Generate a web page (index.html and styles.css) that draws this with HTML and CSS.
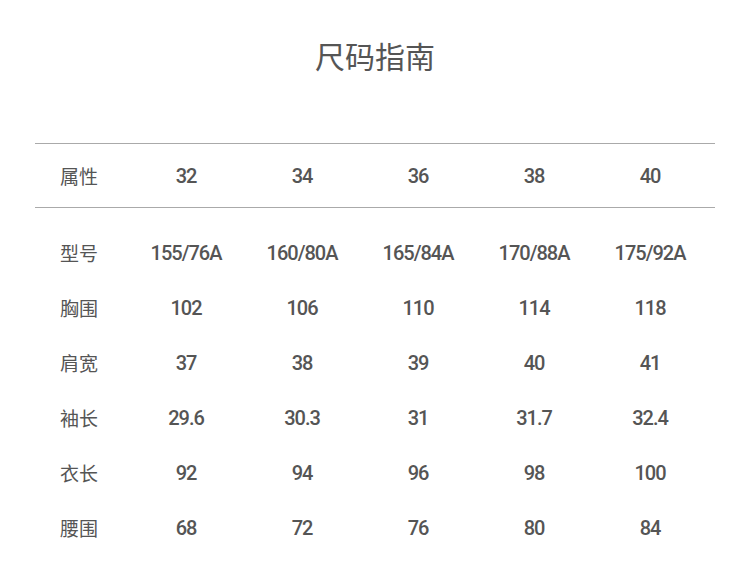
FILE: index.html
```html
<!DOCTYPE html>
<html lang="zh">
<head>
<meta charset="utf-8">
<link rel="stylesheet" href="styles.css">
</head>
<body>
<div class="page">
  <h1 class="title">尺码指南</h1>
  <div class="table">
    <div class="row head">
      <div class="label">属性</div><div class="cell">32</div><div class="cell">34</div><div class="cell">36</div><div class="cell">38</div><div class="cell">40</div>
    </div>
    <div class="body">
      <div class="row"><div class="label">型号</div><div class="cell">155/76A</div><div class="cell">160/80A</div><div class="cell">165/84A</div><div class="cell">170/88A</div><div class="cell">175/92A</div></div>
      <div class="row"><div class="label">胸围</div><div class="cell">102</div><div class="cell">106</div><div class="cell">110</div><div class="cell">114</div><div class="cell">118</div></div>
      <div class="row"><div class="label">肩宽</div><div class="cell">37</div><div class="cell">38</div><div class="cell">39</div><div class="cell">40</div><div class="cell">41</div></div>
      <div class="row"><div class="label">袖长</div><div class="cell">29.6</div><div class="cell">30.3</div><div class="cell">31</div><div class="cell">31.7</div><div class="cell">32.4</div></div>
      <div class="row"><div class="label">衣长</div><div class="cell">92</div><div class="cell">94</div><div class="cell">96</div><div class="cell">98</div><div class="cell">100</div></div>
      <div class="row"><div class="label">腰围</div><div class="cell">68</div><div class="cell">72</div><div class="cell">76</div><div class="cell">80</div><div class="cell">84</div></div>
    </div>
  </div>
</div>
</body>
</html>
```
FILE: styles.css
```css
html, body {
  margin: 0;
  padding: 0;
  background: #ffffff;
}
.page {
  width: 750px;
  padding: 0 35px;
  box-sizing: border-box;
  color: #555555;
  font-family: Roboto, "Noto Sans CJK SC", sans-serif;
}
.title {
  margin: 0;
  padding-top: 35px;
  font-family: "Noto Sans CJK SC", sans-serif;
  font-size: 30px;
  font-weight: 400;
  line-height: 40px;
  text-align: center;
  color: #555555;
}
.table {
  margin-top: 68px;
}
.row {
  display: grid;
  grid-template-columns: 93px repeat(5, 116px);
  align-items: center;
  height: 55px;
}
.head {
  height: 63px;
  border-top: 1px solid #aaaaaa;
  border-bottom: 1px solid #aaaaaa;
}
.body {
  padding-top: 17px;
}
.label {
  padding-left: 25px;
  font-family: "Noto Sans CJK SC", sans-serif;
  font-size: 19px;
}
.cell {
  text-align: center;
  font-size: 20px;
  font-weight: 500;
  letter-spacing: -1px;
  color: #555555;
}
```
